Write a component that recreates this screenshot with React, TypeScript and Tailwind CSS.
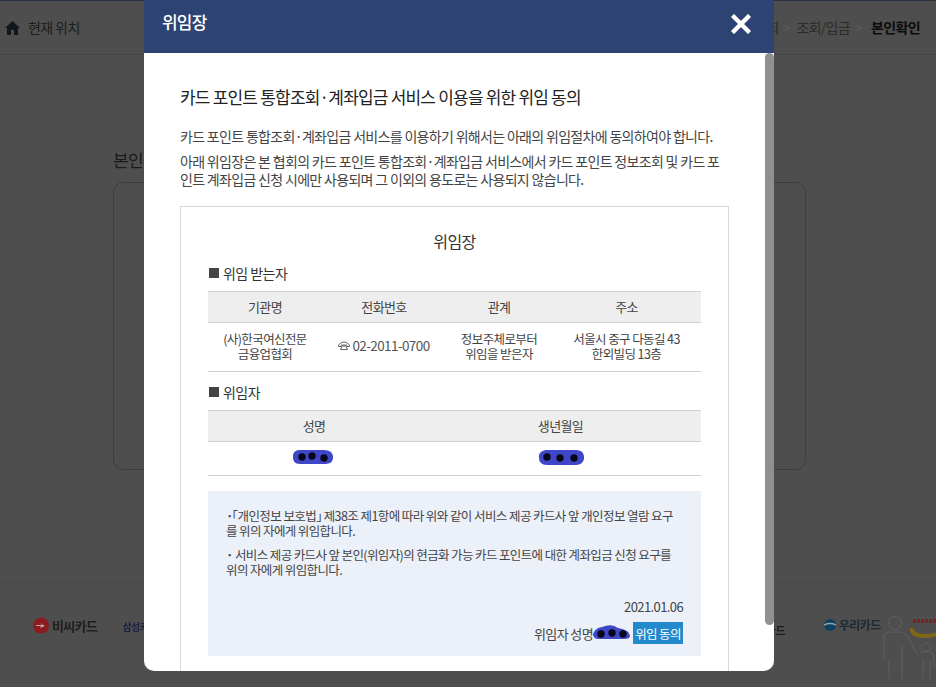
import React from "react";

const font = { fontFamily: '"Noto Sans CJK KR", "Noto Sans", sans-serif' };

function Blob({ w, h, dots, d }: { w: number; h: number; dots: number[][]; d: string }) {
  return (
    <svg width={w} height={h} viewBox={`0 0 ${w} ${h}`} className="block">
      <path d={d} fill="#3f46c8" />
      {dots.map(([x, y], i) => (
        <circle key={i} cx={x} cy={y} r="3.7" fill="#07071a" />
      ))}
    </svg>
  );
}

function Th({ children, className = "" }: { children: React.ReactNode; className?: string }) {
  return <div className={`flex items-center justify-center ${className}`}>{children}</div>;
}

const headCell = "h-[32px] bg-[#eeeeee] border-y border-[#d0d0d0]";

export default function App() {
  return (
    <div className="relative w-[947px] h-[687px] bg-white overflow-hidden tracking-[-0.6px]" style={font}>
      {/* dimmed page */}
      <div className="w-[936px] h-[687px] bg-[#4e4e4e] flex flex-col border-t border-t-[#26303f] overflow-hidden">
        <div className="h-[54px] shrink-0 border-b border-[#464646] flex items-center justify-between pl-[5px] pr-[16px]">
          <div className="flex items-center gap-[8px] text-[14px] text-[#1d1d1d]">
            <svg width="15" height="14" viewBox="0 0 15 14" fill="#12161f">
              <path d="M7.5 0 15 7h-2v7H9V9H6v5H2V7H0z" />
            </svg>
            현재 위치
          </div>
          <div className="flex items-center text-[14px] text-[#2a2a2a] tracking-[-0.75px] whitespace-nowrap">
            <span>통합조회</span>
            <span className="text-[#5c5c5c] ml-[4px]">&gt;</span>
            <span className="ml-[7px]">조회/입금</span>
            <span className="text-[#5c5c5c] ml-[5px]">&gt;</span>
            <span className="font-bold text-[#0c0c0c] ml-[9px] tracking-[-0.6px]">본인확인</span>
          </div>
        </div>
        <div className="flex-1 pl-[113px] pr-[130px] pt-[94px]">
          <div className="text-[17px] text-[#1a1a1a] leading-[22px]">본인확인</div>
          <div className="mt-[11px] h-[288px] rounded-[10px] border border-[#3e3e3e] bg-[#4e4e4e]" />
        </div>
        <div className="h-[105px] shrink-0 mt-auto border-t border-[#474747] flex items-start pt-[33px] relative whitespace-nowrap">
          <div className="flex items-center gap-[3px] ml-[33px] text-[13px] font-bold text-[#1e1e1e] blur-[0.4px]">
            <svg width="16" height="17" viewBox="0 0 16 17">
              <circle cx="8" cy="8.500" r="8" fill="#8a1b1e" />
              <path d="M3 8h6l-2-2 5 3-5 2 1-2H3z" fill="#c9a0a0" />
            </svg>
            비씨카드
          </div>
          <span className="ml-[25px] mt-[3px] text-[10px] font-bold text-[#1a2040] blur-[0.4px]">삼성카드</span>
          <span className="ml-[609px] mt-[6px] text-[11px] font-bold text-[#1e1e1e] blur-[0.4px]">카드</span>
          <div className="flex items-center gap-[3px] ml-[39px] text-[12px] font-bold text-[#1c2a36] blur-[0.4px]">
            <svg width="12" height="12" viewBox="0 0 12 12">
              <circle cx="6" cy="6" r="6" fill="#10405e" />
              <path d="M0 6q6-3 12 0" stroke="#8fa3b0" strokeWidth="1.400" fill="none" />
            </svg>
            우리카드
          </div>
          <svg className="absolute left-[910px] top-[36px] blur-[0.4px]" width="26" height="24" viewBox="0 0 26 24" fill="none">
            <path d="M3 2h23" stroke="#7d2020" strokeWidth="4" strokeDasharray="3 1" />
            <path d="M1 9q1 8 14 8 7 0 11-2" stroke="#7f6716" strokeWidth="4" />
          </svg>
          <svg className="absolute left-[882px] top-[33px]" width="54" height="64" viewBox="0 0 54 64" fill="none" stroke="#5f5f5f" strokeWidth="1">
            <circle cx="13" cy="7" r="6.500" />
            <path d="M2 42V21q0-5 5-5h12q5 1 9 9l7 13M7 44v19M20 30v33M44 27a4.500 4.500 0 1 0 .1 0M38 37q6-4 12 0 2 2 2 14M41 44v19M48 44v19" />
          </svg>
        </div>
      </div>

      {/* modal */}
      <div className="absolute left-[144px] top-0 w-[630px] h-[671px] bg-white rounded-b-[10px] overflow-hidden flex flex-col">
        <div className="h-[53px] shrink-0 bg-[#2d4373] flex items-center justify-between pl-[18px] pr-[23px] pb-[5px]">
          <span className="text-[17px] font-medium text-white mb-[4px] tracking-[-0.8px]">위임장</span>
          <svg width="20" height="20" viewBox="0 0 20 20" stroke="#fff" strokeWidth="4.400" strokeLinecap="square">
            <path d="M3 3l14 14M17 3 3 17" />
          </svg>
        </div>
        <div className="relative flex-1 overflow-hidden pl-[36px] pr-[45px] pt-[32px]">
          {/* scrollbar */}
          <div className="absolute right-0 top-0 w-[9px] h-[572px] rounded-[5px] bg-[#909090]" />
          <h2 className="text-[17px] leading-[24px] font-normal text-[#222] tracking-[-0.8px]">
            카드 포인트 통합조회·계좌입금 서비스 이용을 위한 위임 동의
          </h2>
          <p className="mt-[18px] text-[14px] leading-[18px] text-[#444] tracking-[-0.68px]">
            카드 포인트 통합조회·계좌입금 서비스를 이용하기 위해서는 아래의 위임절차에 동의하여야 합니다.
          </p>
          <p className="mt-[7px] text-[14px] leading-[18px] text-[#444] tracking-[-0.68px] break-all">
            아래 위임장은 본 협회의 카드 포인트 통합조회·계좌입금 서비스에서 카드 포인트 정보조회 및 카드 포인트 계좌입금 신청 시에만 사용되며 그 이외의 용도로는 사용되지 않습니다.
          </p>

          <div className="mt-[18px] border border-[#d8d8d8] h-[520px] px-[27px] pt-[23px] w-[549px]">
            <div className="text-center text-[16px] leading-[22px] text-[#333]">위임장</div>
            <div className="mt-[11px] flex items-center gap-[4px] text-[14px] leading-[20px] text-[#333] tracking-[-0.55px]">
              <span className="ml-[1px] w-[10px] h-[10px] bg-[#444] block" />위임 받는자
            </div>
            <div className="mt-[8px] grid grid-cols-[114px_124px_106px_149px] text-[13px] text-[#444] text-center border-b border-[#d0d0d0]">
              <Th className={headCell}>기관명</Th>
              <Th className={headCell}>전화번호</Th>
              <Th className={headCell}>관계</Th>
              <Th className={headCell}>주소</Th>
              <Th className="h-[48px] pb-[2px] leading-[15px] text-[12.5px]">(사)한국여신전문<br />금융업협회</Th>
              <Th className="h-[48px] pb-[4px] text-[13.5px] gap-[2px] text-[#555]">
                <svg width="12" height="9" viewBox="0 0 12 9" fill="none" stroke="#555" strokeWidth="0.900">
                  <path d="M.5 4q5.500-6 11 0v1.500H9L8.500 4h-5L3 5.500H.5zM2.500 8.500 4 5h4l1.500 3.500z" />
                </svg>
                02-2011-0700
              </Th>
              <Th className="h-[48px] pb-[2px] leading-[15px] text-[12.5px]">정보주체로부터<br />위임을 받은자</Th>
              <Th className="h-[48px] pb-[2px] leading-[15px] text-[12.5px]">서울시 중구 다동길 43<br />한외빌딩 13층</Th>
            </div>
            <div className="mt-[10px] flex items-center gap-[4px] text-[14px] leading-[20px] text-[#333] tracking-[-0.55px]">
              <span className="ml-[1px] w-[10px] h-[10px] bg-[#444] block" />위임자
            </div>
            <div className="mt-[8px] grid grid-cols-[212px_281px] text-[13px] text-[#444] border-b border-[#d0d0d0]">
              <Th className={headCell}>성명</Th>
              <Th className={headCell}>생년월일</Th>
              <Th className="h-[33px]">
                <span className="-mt-[3px] -ml-[3px]">
                  <Blob w={42} h={16} dots={[[10, 8], [20, 7], [32, 9]]} d="M1 6Q2 1 8 1h24q8 0 9 6 1 7-7 8H8Q0 15 1 6z" />
                </span>
              </Th>
              <Th className="h-[33px]">
                <span className="-mt-[3px]">
                  <Blob w={46} h={17} dots={[[9, 8], [22, 9], [36, 9]]} d="M1 6Q2 2 8 1h30q7 0 8 6 1 8-8 9H9Q0 16 1 6z" />
                </span>
              </Th>
            </div>
            <div className="mt-[15px] h-[165px] bg-[#ebf0f9] pl-[18px] pr-[18px] pt-[17px] flex flex-col text-[12.5px] leading-[15px] text-[#444] tracking-[-0.62px]">
              <p className="whitespace-nowrap tracking-[-0.58px]">
                <span className="font-bold">·</span>
                <span className="-ml-[1px]">「</span>
                <span>개인정보 보호법</span>
                <span className="tracking-[-6px]">」</span>
                <span className="ml-[1px]">제38조 제1항에 따라 위와 같이 서비스 제공 카드사 앞 개인정보 열람 요구</span>
                <br />
                <span className="tracking-[-0.62px]">를 위의 자에게 위임합니다.</span>
              </p>
              <p className="mt-[9px] whitespace-nowrap">
                <span className="font-bold">·</span> 서비스 제공 카드사 앞 본인(위임자)의 현금화 가능 카드 포인트에 대한 계좌입금 신청 요구를
                <br />위의 자에게 위임합니다.
              </p>
              <div className="mt-[22px] text-right text-[13px] leading-[16px] tracking-[-0.6px]">2021.01.06</div>
              <div className="mt-[7px] flex items-center justify-end text-[13px]">
                위임자 성명
                <span className="mr-[3px] -mt-[3px]">
                  <Blob w={37} h={16} dots={[[8, 10], [19, 9], [30, 10]]} d="M0 10Q2 4 9 3q10-4 16 1 12 2 12 8 0 3-6 3H6Q0 15 0 10z" />
                </span>
                <span className="w-[50px] h-[22px] bg-[#2389cd] text-white text-[12.5px] flex items-center justify-center">위임 동의</span>
              </div>
            </div>
          </div>
        </div>
      </div>
    </div>
  );
}
